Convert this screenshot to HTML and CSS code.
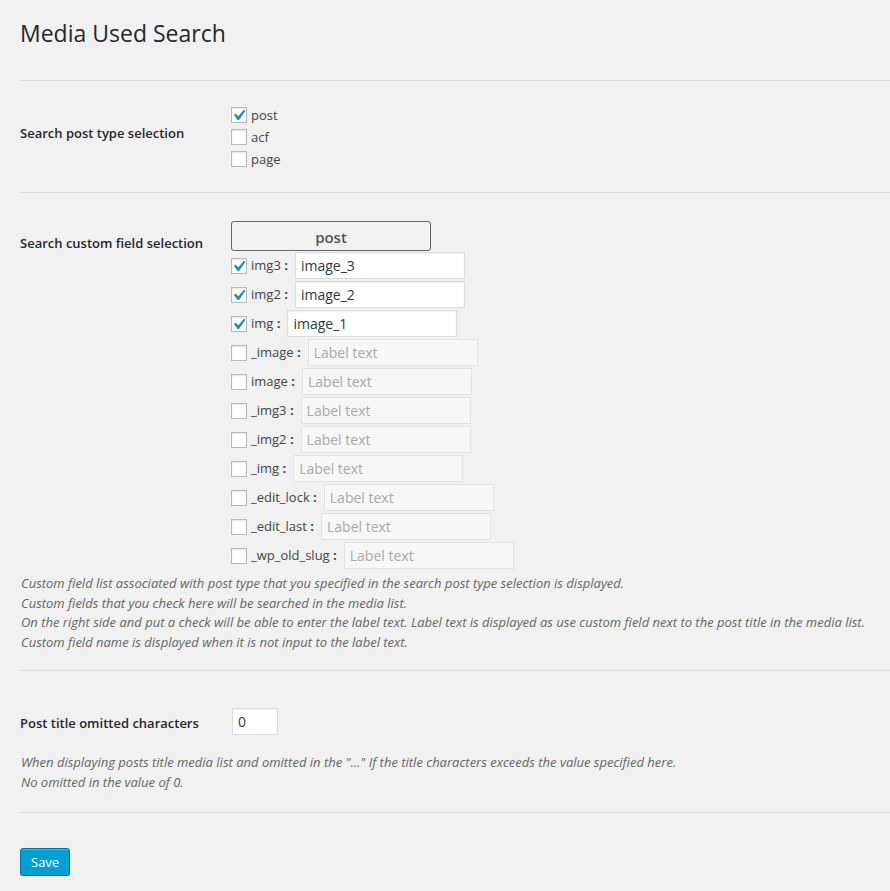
FILE: index.html
```html
<!DOCTYPE html>
<html lang="en">
<head>
<meta charset="utf-8">
<title>Media Used Search</title>
<link rel="stylesheet" href="styles.css">
</head>
<body>
<div class="wrap">
  <h1 class="page-title">Media Used Search</h1>
  <form class="settings">
    <section class="setting setting-types">
      <div class="setting-grid">
        <div class="setting-label">Search post type selection</div>
        <div class="setting-field">
          <label class="check-row"><span class="cb is-checked"><svg viewBox="3.96 3.34 12.73 12.73" width="14" height="14"><path d="M14.83 4.89l1.34.94-5.81 8.38H9.02L5.78 9.67l1.34-1.25 2.57 2.4z"/></svg></span><span class="check-text">post</span></label>
          <label class="check-row"><span class="cb"></span><span class="check-text">acf</span></label>
          <label class="check-row"><span class="cb"></span><span class="check-text">page</span></label>
        </div>
      </div>
    </section>

    <section class="setting setting-fields">
      <div class="setting-grid">
        <div class="setting-label">Search custom field selection</div>
        <div class="setting-field">
          <div class="type-button">post</div>
          <div class="field-row"><span class="cb is-checked"><svg viewBox="3.96 3.34 12.73 12.73" width="14" height="14"><path d="M14.83 4.89l1.34.94-5.81 8.38H9.02L5.78 9.67l1.34-1.25 2.57 2.4z"/></svg></span><span class="field-name">img3 <b class="colon">:</b></span><input class="field-input" type="text" value="image_3" placeholder="Label text"></div>
          <div class="field-row"><span class="cb is-checked"><svg viewBox="3.96 3.34 12.73 12.73" width="14" height="14"><path d="M14.83 4.89l1.34.94-5.81 8.38H9.02L5.78 9.67l1.34-1.25 2.57 2.4z"/></svg></span><span class="field-name">img2 <b class="colon">:</b></span><input class="field-input" type="text" value="image_2" placeholder="Label text"></div>
          <div class="field-row"><span class="cb is-checked"><svg viewBox="3.96 3.34 12.73 12.73" width="14" height="14"><path d="M14.83 4.89l1.34.94-5.81 8.38H9.02L5.78 9.67l1.34-1.25 2.57 2.4z"/></svg></span><span class="field-name">img <b class="colon">:</b></span><input class="field-input" type="text" value="image_1" placeholder="Label text"></div>
          <div class="field-row"><span class="cb"></span><span class="field-name">_image <b class="colon">:</b></span><input class="field-input" type="text" placeholder="Label text" disabled></div>
          <div class="field-row"><span class="cb"></span><span class="field-name">image <b class="colon">:</b></span><input class="field-input" type="text" placeholder="Label text" disabled></div>
          <div class="field-row"><span class="cb"></span><span class="field-name">_img3 <b class="colon">:</b></span><input class="field-input" type="text" placeholder="Label text" disabled></div>
          <div class="field-row"><span class="cb"></span><span class="field-name">_img2 <b class="colon">:</b></span><input class="field-input" type="text" placeholder="Label text" disabled></div>
          <div class="field-row"><span class="cb"></span><span class="field-name">_img <b class="colon">:</b></span><input class="field-input" type="text" placeholder="Label text" disabled></div>
          <div class="field-row"><span class="cb"></span><span class="field-name">_edit_lock <b class="colon">:</b></span><input class="field-input" type="text" placeholder="Label text" disabled></div>
          <div class="field-row"><span class="cb"></span><span class="field-name">_edit_last <b class="colon">:</b></span><input class="field-input" type="text" placeholder="Label text" disabled></div>
          <div class="field-row"><span class="cb"></span><span class="field-name">_wp_old_slug <b class="colon">:</b></span><input class="field-input" type="text" placeholder="Label text" disabled></div>
        </div>
      </div>
      <p class="description description-fields">Custom field list associated with post type that you specified in the search post type selection is displayed.<br>Custom fields that you check here will be searched in the media list.<br>On the right side and put a check will be able to enter the label text. Label text is displayed as use custom field next to the post title in the media list.<br>Custom field name is displayed when it is not input to the label text.</p>
    </section>

    <section class="setting setting-omit">
      <div class="setting-grid">
        <div class="setting-label">Post title omitted characters</div>
        <div class="setting-field">
          <input class="number-input" type="text" value="0">
        </div>
      </div>
      <p class="description description-omit">When displaying posts title media list and omitted in the "..." If the title characters exceeds the value specified here.<br>No omitted in the value of 0.</p>
    </section>

    <div class="submit">
      <button type="button" class="button-primary">Save</button>
    </div>
  </form>
</div>
</body>
</html>
```
FILE: styles.css
```css
html, body {
  margin: 0;
  padding: 0;
  background: #f1f1f1;
}
body {
  font-family: "Open Sans", "Noto Sans", sans-serif;
  font-size: 13px;
  line-height: 1.4;
  color: #444;
}
.wrap {
  margin-left: 20px;
}
.page-title {
  margin: 18px 0 0;
  font-size: 23px;
  font-weight: 400;
  line-height: 30px;
  color: #23282d;
}
.settings {
  margin: 32px 0 0;
}
.setting {
  border-top: 1px solid #ddd;
}
.setting-grid {
  display: grid;
  grid-template-columns: 211px 1fr;
  align-items: start;
}
.setting-label {
  font-size: 13px;
  font-weight: 600;
  line-height: 18px;
  color: #23282d;
}

/* section 1 */
.setting-types .setting-label { padding-top: 43px; }
.setting-types .setting-field { padding: 23px 0 22px; }
.check-row {
  display: flex;
  align-items: center;
  height: 22px;
}
.check-text { margin-left: 4px; }

/* checkbox */
.cb {
  box-sizing: border-box;
  flex: none;
  width: 16px;
  height: 16px;
  border: 1px solid #b4b9be;
  background: #fff;
  box-shadow: inset 0 1px 2px rgba(0,0,0,.1);
}
.cb svg {
  display: block;
  fill: #1e8cbe;
}

/* section 2 */
.setting-fields .setting-label { padding-top: 41px; }
.setting-fields .setting-field { padding-top: 28px; }
.type-button {
  box-sizing: border-box;
  width: 200px;
  height: 30px;
  border: 1px solid #666;
  border-radius: 3px;
  background: #f1f1f1;
  text-align: center;
  font-size: 15px;
  font-weight: 600;
  line-height: 30px;
  color: #555;
}
.field-row {
  display: flex;
  align-items: center;
  height: 29px;
}
.field-name {
  margin: 0 7px 0 4px;
  white-space: pre;
}
.colon {
  font-weight: 700;
}
.field-input {
  box-sizing: border-box;
  width: 170px;
  height: 27px;
  margin: 1px 0;
  padding: 3px 5px;
  border: 1px solid #ddd;
  background: #fff;
  box-shadow: inset 0 1px 2px rgba(0,0,0,.07);
  font-family: inherit;
  font-size: 14px;
  color: #32373c;
  outline: none;
}
.field-input:disabled {
  background: #f7f7f7;
  border-color: #e3e3e3;
  box-shadow: none;
}
.field-input::placeholder {
  color: #a9a9a9;
  opacity: 1;
}
.description {
  margin: 0;
  padding-left: 1px;
  font-style: italic;
  font-size: 13px;
  line-height: 19.5px;
  color: #666;
}
.description-fields { padding-top: 4px; padding-bottom: 18px; }

/* section 3 */
.setting-omit .setting-label { padding-top: 43px; }
.setting-omit .setting-field { padding-top: 36px; }
.number-input {
  box-sizing: border-box;
  display: block;
  width: 46px;
  height: 27px;
  margin: 1px 1px;
  padding: 3px 5px;
  border: 1px solid #ddd;
  background: #fff;
  box-shadow: inset 0 1px 2px rgba(0,0,0,.07);
  font-family: inherit;
  font-size: 14px;
  color: #32373c;
  outline: none;
}
.description-omit { padding-top: 17px; padding-bottom: 20px; }

/* submit */
.submit {
  border-top: 1px solid #ddd;
  padding-top: 35px;
}
.button-primary {
  box-sizing: border-box;
  height: 28px;
  margin: 0;
  padding: 0 10px 1px;
  border: 1px solid #0073aa;
  border-radius: 3px;
  background: #00a0d2;
  box-shadow: inset 0 1px 0 rgba(120,200,230,.5), 0 1px 0 rgba(0,0,0,.15);
  font-family: inherit;
  font-size: 13px;
  line-height: 26px;
  color: #fff;
  cursor: pointer;
}
```
